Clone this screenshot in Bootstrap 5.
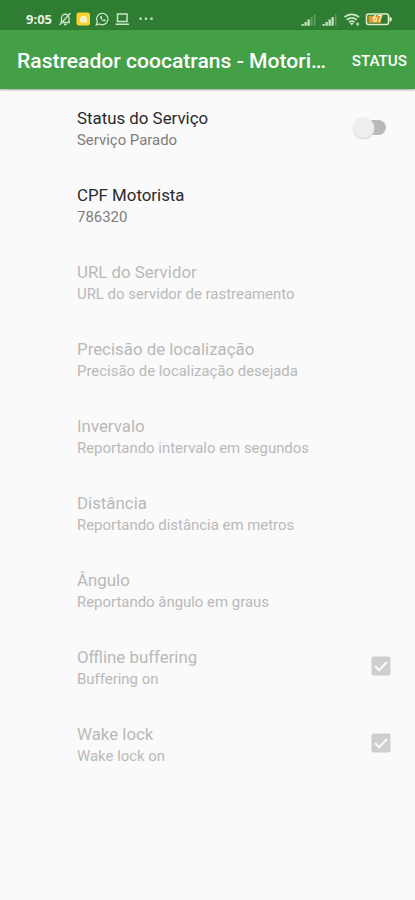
<!DOCTYPE html>
<html lang="pt-BR">
<head>
<meta charset="utf-8">
<meta name="viewport" content="width=device-width, initial-scale=1">
<title>Rastreador coocatrans - Motorista</title>
<link href="https://cdn.jsdelivr.net/npm/bootstrap@5.3.0/dist/css/bootstrap.min.css" rel="stylesheet">
<style>
body{font-family:Roboto,"Liberation Sans",sans-serif;background:#fafafa;height:900px;overflow:hidden}
.sysbar{height:30px;background:#2e7d32;padding:7px 22px 0 26px;color:#e3f1e3}
.sysbar svg{display:block;flex:none}
.clock{font:700 13px/24px "Open Sans",sans-serif;width:32px;white-space:nowrap}
.appbar{height:59px;background:#43a047;padding:2px 8px 0 17px;box-shadow:0 1px 2px rgba(0,0,0,.35)}
.apptitle{font-size:21.1px;font-weight:500;line-height:30px;white-space:nowrap}
.action{font-size:15.2px;font-weight:500;line-height:30px;white-space:nowrap}
.prefs{padding-top:1px}
.pref{height:77px;padding:0 24px 0 77px;border:0;background:transparent}
.pref>div{padding-top:2px}
.pref-name{font-size:16.850px;line-height:21px;color:#2b2b2b;white-space:nowrap}
.pref-note{font-size:14.930px;line-height:22px;color:#7d7d7d;white-space:nowrap}
.off .pref-name{color:#b9b9b9}
.off .pref-note{color:#b9b9b9}
.toggle{margin:0 3px 2px 0}
.tick{margin-bottom:3px}
</style>
</head>
<body>
<header>
<div class="sysbar d-flex justify-content-between">
  <div class="d-flex align-items-center h-100">
    <span class="clock">9:05</span>
    <svg width="100" height="16" viewBox="0 0 100 16" fill="none" stroke="#c8e5c6" stroke-width="1.3">
      <path d="M2.500 11.500h9.500M3.500 11.500V7a3.700 3.700 0 0 1 7.500 0v4.500M6 13.500h2.600M1.500 14L12.500 2"/>
      <rect x="18.500" y="1.500" width="13.500" height="13" rx="2.500" fill="#fdd22f" stroke="none"/>
      <path d="M22.500 7h6v4h-6zM23.500 6.500v-1h4v1" fill="#fff6cf" stroke="#fff6cf" stroke-width="1"/>
      <path d="M24.500 9h2" stroke="#fdd22f"/>
      <path d="M38.300 14l1-3.200a5.700 5.700 0 1 1 2.200 2.200z"/>
      <path d="M42.200 5.300c-.9 2.100 2.600 5.800 5 4.900l.6-1.300-1.700-.8-.8.8c-.9-.4-1.300-.9-1.700-1.700l.6-.8-.6-1.400z" fill="#c8e5c6" stroke="none"/>
      <path d="M59.500 3h9.500v7.500h-9.500zM57.500 13.200h13.500" stroke-width="1.5"/>
      <g fill="#c4dfc3" stroke="none"><rect x="81.300" y="6.500" width="2.600" height="2.400" rx=".8"/><rect x="86.700" y="6.500" width="2.600" height="2.400" rx=".8"/><rect x="92.200" y="6.500" width="2.600" height="2.400" rx=".8"/></g>
    </svg>
  </div>
  <div class="d-flex align-items-center h-100">
    <svg width="92" height="16" viewBox="0 0 92 16">
      <g fill="#c9e5c6"><path d="M.5 13h2.300v1.700H.5zM3.500 11h2.300v3.700H3.500zM6.500 8.500h2.300v6.200H6.500z"/><path d="M21.500 13h2.300v1.700h-2.300zM24.500 11h2.300v3.700h-2.300zM27.500 8.500h2.300v6.200h-2.300zM30.500 6h2.200v8.700h-2.200z"/></g>
      <path d="M9.700 6h2v8.700h-2zM13 3.500h1.500v11.200H13zM34 3.500h1.500v11.200H34z" fill="#629f62"/>
      <g fill="none" stroke="#c9e5c6" stroke-width="1.800"><path d="M43.500 6.200a10.500 10.500 0 0 1 14.500 0M45.800 8.900a7.200 7.200 0 0 1 10 0M48.200 11.300a4 4 0 0 1 5.200 0"/></g>
      <path d="M48.800 12.100h4l-2 2.300zM55.500 11.800h2.300v2.700h-2.300z" fill="#c9e5c6"/>
      <rect x="65.500" y="3" width="22" height="10.500" rx="2" fill="none" stroke="#e3efd0" stroke-width="1.500"/>
      <path d="M88.500 5.500l2.300 1.500v2.500L88.500 11z" fill="#e3efd0"/>
      <rect x="67.500" y="4.800" width="12.500" height="7" fill="#e59a24"/>
      <text x="71.500" y="11.300" font-family="Roboto,sans-serif" font-size="8.500" font-weight="700" fill="#fff4d8">67</text>
    </svg>
  </div>
</div>
<nav class="appbar d-flex align-items-center justify-content-between text-white position-relative">
  <div class="apptitle">Rastreador coocatrans - Motori…</div>
  <div class="action">STATUS</div>
</nav>
</header>
<main class="prefs list-group list-group-flush">
  <div class="pref list-group-item d-flex align-items-center justify-content-between"><div><div class="pref-name">Status do Serviço</div><div class="pref-note">Serviço Parado</div></div>
    <svg class="toggle" width="38" height="28" viewBox="0 0 38 28"><rect x="8" y="6" width="28" height="15" rx="7.500" fill="#bababa"/><circle cx="13.500" cy="14.500" r="10.800" fill="#ddd"/><circle cx="13.500" cy="13.500" r="10.500" fill="#eee"/></svg></div>
  <div class="pref list-group-item d-flex align-items-center"><div><div class="pref-name">CPF Motorista</div><div class="pref-note">786320</div></div></div>
  <div class="pref off list-group-item d-flex align-items-center"><div><div class="pref-name">URL do Servidor</div><div class="pref-note">URL do servidor de rastreamento</div></div></div>
  <div class="pref off list-group-item d-flex align-items-center"><div><div class="pref-name">Precisão de localização</div><div class="pref-note">Precisão de localização desejada</div></div></div>
  <div class="pref off list-group-item d-flex align-items-center"><div><div class="pref-name">Invervalo</div><div class="pref-note">Reportando intervalo em segundos</div></div></div>
  <div class="pref off list-group-item d-flex align-items-center"><div><div class="pref-name">Distância</div><div class="pref-note">Reportando distância em metros</div></div></div>
  <div class="pref off list-group-item d-flex align-items-center"><div><div class="pref-name">Ângulo</div><div class="pref-note">Reportando ângulo em graus</div></div></div>
  <div class="pref off list-group-item d-flex align-items-center justify-content-between"><div><div class="pref-name">Offline buffering</div><div class="pref-note">Buffering on</div></div>
    <svg class="tick" width="20" height="20" viewBox="0 0 20 20"><rect x=".5" y=".5" width="19" height="19" rx="2" fill="#cecece"/><path d="M4 10l4.200 4.200L16 6" fill="none" stroke="#fafafa" stroke-width="2.200"/></svg></div>
  <div class="pref off list-group-item d-flex align-items-center justify-content-between"><div><div class="pref-name">Wake lock</div><div class="pref-note">Wake lock on</div></div>
    <svg class="tick" width="20" height="20" viewBox="0 0 20 20"><rect x=".5" y=".5" width="19" height="19" rx="2" fill="#cecece"/><path d="M4 10l4.200 4.200L16 6" fill="none" stroke="#fafafa" stroke-width="2.200"/></svg></div>
</main>
<script src="https://cdn.jsdelivr.net/npm/bootstrap@5.3.0/dist/js/bootstrap.bundle.min.js"></script>
</body>
</html>
